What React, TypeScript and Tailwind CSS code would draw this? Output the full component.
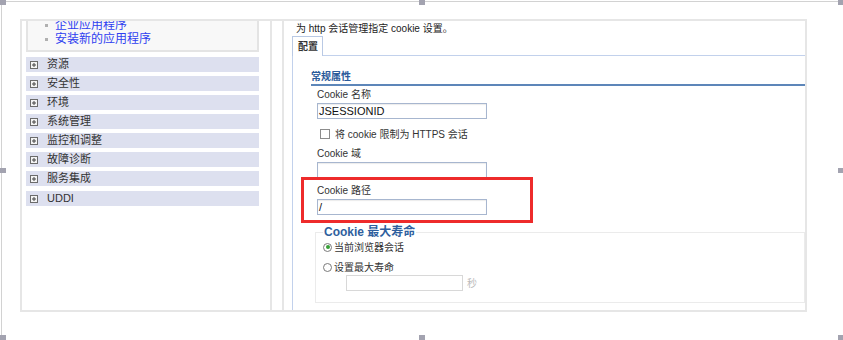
const font = "font-['Liberation_Sans','Noto_Sans_CJK_SC',sans-serif]";

const menu = ['资源', '安全性', '环境', '系统管理', '监控和调整', '故障诊断', '服务集成'];

function PlusBox() {
  return (
    <svg width="8" height="8" viewBox="0 0 8 8" className="shrink-0">
      <rect x="0.5" y="0.5" width="7" height="7" fill="#f4f4f4" stroke="#6b6b6b" />
      <path d="M2 4h4M4 2v4" stroke="#444" />
    </svg>
  );
}

function Handle({ className }: { className: string }) {
  return <div className={`absolute h-[5px] w-[6px] bg-[#a3a3b0] ${className}`} />;
}

function Field({ label, value, className = '' }: { label: string; value?: string; className?: string }) {
  return (
    <div className={className}>
      <div className="h-[14px] text-[10px] leading-[14px] text-[#333]">{label}</div>
      <div className="mt-[1px] flex h-[16px] w-[170px] items-center border border-[#a7b6cf] bg-white px-[1px] text-[11px] leading-none text-[#111] shadow-[inset_0_1px_1px_rgba(0,0,0,0.08)]">
        {value}
      </div>
    </div>
  );
}

function Radio({ checked }: { checked?: boolean }) {
  return (
    <span className="flex h-[9px] w-[9px] items-center justify-center rounded-full border border-[#7a7a7a] bg-white">
      {checked && <span className="h-[4px] w-[4px] rounded-full bg-[#37a037]" />}
    </span>
  );
}

export default function App() {
  return (
    <div className={`relative h-[340px] w-[843px] overflow-hidden bg-white ${font}`}>
      {/* selection frame around the screenshot */}
      <div className="absolute left-0 top-[1px] h-px w-[839px] bg-[#d2d2d2]" />
      <div className="absolute left-[1px] top-0 h-[340px] w-px bg-[#d2d2d2]" />
      <Handle className="left-0 top-0" />
      <Handle className="left-[419px] top-0" />
      <Handle className="left-[838px] top-0" />
      <Handle className="left-0 top-[168px]" />
      <Handle className="left-[838px] top-[168px]" />
      <Handle className="left-0 top-[335px]" />
      <Handle className="left-[419px] top-[335px]" />
      <Handle className="left-[838px] top-[335px]" />

      <div className="pl-[20px] pt-[19px]">
        <div className="flex h-[293px] w-[787px] border-2 border-[#e6e6e6]">
          {/* navigation */}
          <aside className="w-[250px] shrink-0 overflow-hidden border-r-2 border-[#e6e6e6]">
            <div className="ml-[4px] -mt-[6px] w-[233px] border-2 border-[#e4e4e4] bg-[#f8f8f8] pb-[4px] pl-[17px] pt-[1px]">
              {['企业应用程序', '安装新的应用程序'].map((t) => (
                <div key={t} className="flex h-[14px] items-center gap-[7px] text-[12px] leading-[14px] text-[#2f3ff0]">
                  <span className="h-[3px] w-[3px] bg-[#b0b0b0]" />
                  {t}
                </div>
              ))}
            </div>
            <div className="ml-[4px] mt-[5px] flex w-[233px] flex-col gap-[4px]">
              {menu.map((t) => (
                <div key={t} className="flex h-[15px] items-center gap-[9px] bg-[#dde0ef] pl-[4px] text-[11px] text-[#333]">
                  <PlusBox />
                  {t}
                </div>
              ))}
              <div className="mt-[1px] flex h-[15px] items-center gap-[9px] bg-[#dde0ef] pl-[4px] text-[11px] text-[#333]">
                <PlusBox />
                UDDI
              </div>
            </div>
          </aside>

          <div className="w-[12px] shrink-0 border-r-2 border-[#e6e6e6]" />

          {/* content */}
          <main className="flex min-w-0 flex-1 flex-col pl-[8px]">
            <div className="h-[15px] pl-[4px] pt-[1px] text-[10px] leading-[14px] text-[#222]">
              为 http 会话管理指定 cookie 设置。
            </div>
            <div className="relative z-10 -mb-[1px] flex h-[20px] w-[31px] items-center border-x border-t border-[#b9c9e4] bg-white pl-[5px] text-[10px] font-bold text-[#333]">
              配置
            </div>
            <div className="flex-1 border-l border-t border-[#c2d1ec] pl-[18px]">
              <div className="border-b-2 border-[#5d86b9] pt-[14px] text-[10px] font-bold leading-[14px] text-[#2a5a9a]">
                常规属性
              </div>
              <div className="pl-[6px]">
                <Field label="Cookie 名称" value="JSESSIONID" className="mt-[2px]" />
                <div className="mt-[8px] flex h-[14px] items-center gap-[5px] pl-[3px] text-[10px] text-[#333]">
                  <span className="h-[10px] w-[10px] border border-[#8c8c8c] bg-white" />
                  将 cookie 限制为 HTTPS 会话
                </div>
                <Field label="Cookie 域" className="mt-[6px]" />
                <Field label="Cookie 路径" value="/" className="mt-[6px]" />
              </div>
              <fieldset className="ml-[4px] mt-[10px] border border-[#ebebeb] pb-[11px] pl-[7px]">
                <legend className="px-[1px] text-[12px] font-bold leading-[14px] text-[#2f5f9e]">
                  Cookie 最大寿命
                </legend>
                <div className="mt-[1px] flex h-[14px] items-center gap-[2px] text-[10px] text-[#333]">
                  <Radio checked />
                  当前浏览器会话
                </div>
                <div className="mt-[6px] flex h-[14px] items-center gap-[2px] text-[10px] text-[#333]">
                  <Radio />
                  设置最大寿命
                </div>
                <div className="mt-[1px] flex items-center gap-[4px] pl-[23px]">
                  <div className="h-[16px] w-[117px] border border-[#d8d8d8] bg-white" />
                  <span className="text-[10px] text-[#bbb]">秒</span>
                </div>
              </fieldset>
            </div>
          </main>
        </div>
      </div>

      {/* red highlight annotation */}
      <div className="absolute left-[301px] top-[177px] h-[46px] w-[232px] border-[3px] border-[#ee2b2b]" />
    </div>
  );
}
